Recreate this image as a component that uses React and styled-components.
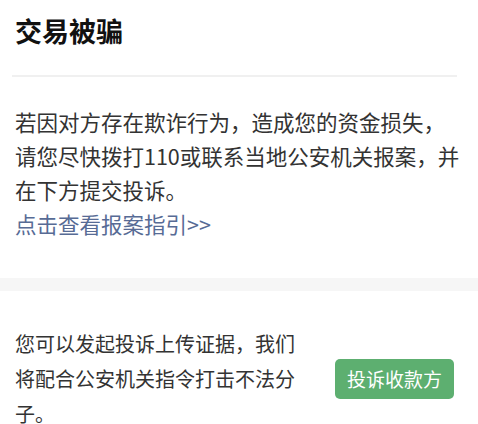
import React from 'react';
import styled, { createGlobalStyle } from 'styled-components';

const GlobalStyle = createGlobalStyle`
  body {
    margin: 0;
    background: #ffffff;
    font-family: "Noto Sans CJK SC", "Noto Sans", sans-serif;
  }
`

const Page = styled.div`
  width: 478px;
  height: 424px;
  overflow: hidden;
  background: #ffffff;
`
const TopSection = styled.section`
  padding: 0 0 37px;
`
const Title = styled.h1`
  margin: 0;
  padding: 13px 15px 0;
  height: 36px;
  font-size: 27px;
  line-height: 36px;
  font-weight: 700;
  color: #111111;
`
const Divider = styled.div`
  height: 2px;
  margin: 26px 21px 0 12px;
  background: #f0f0f0;
`
const Paragraph = styled.p`
  margin: 28px 0 0 15px;
  width: 448px;
  font-size: 21.5px;
  line-height: 34px;
  color: #333333;
`
const GuideLink = styled.a`
  display: block;
  margin-left: 15px;
  font-size: 21.5px;
  line-height: 34px;
  color: #576b95;
  text-decoration: none;
`
const Band = styled.div`
  height: 13px;
  background: #f6f6f6;
`
const BottomSection = styled.section`
  display: flex;
  align-items: center;
  padding: 35px 24px 0 15px;
`
const Notice = styled.p`
  margin: 0;
  width: 290px;
  font-size: 20px;
  line-height: 35px;
  color: #333333;
`
const ActionButton = styled.button`
  margin-left: auto;
  width: 119px;
  height: 40px;
  border: none;
  border-radius: 5px;
  background: #5daf70;
  color: #ffffff;
  font-family: inherit;
  font-size: 19px;
  padding: 0;
`

const App = () => {
  return (
    <>
      <GlobalStyle />
      <Page>
        <TopSection>
          <Title>交易被骗</Title>
          <Divider />
          <Paragraph>
            若因对方存在欺诈行为，造成您的资金损失，请您尽快拨打110或联系当地公安机关报案，并在下方提交投诉。
          </Paragraph>
          <GuideLink href="#">点击查看报案指引&gt;&gt;</GuideLink>
        </TopSection>
        <Band />
        <BottomSection>
          <Notice>您可以发起投诉上传证据，我们将配合公安机关指令打击不法分子。</Notice>
          <ActionButton>投诉收款方</ActionButton>
        </BottomSection>
      </Page>
    </>
  );
};

export default App;
